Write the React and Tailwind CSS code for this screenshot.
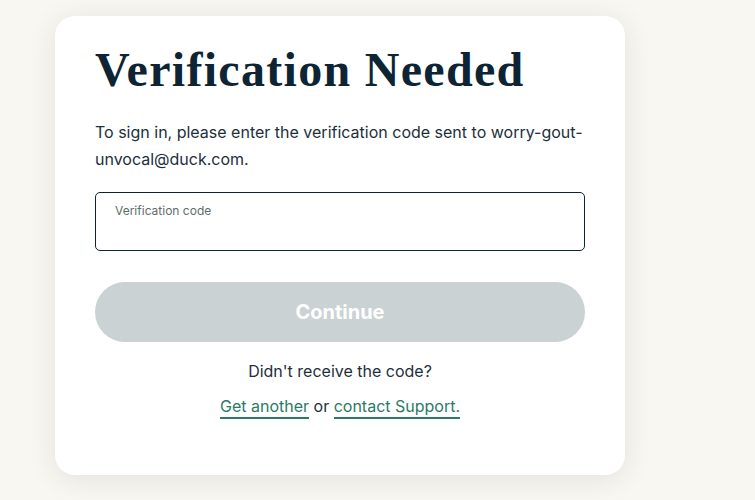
export default function App() {
  return (
    <div className="min-h-[500px] w-full bg-[#f8f7f2] pt-4 pl-[55px] font-['Inter','Liberation_Sans',sans-serif]">
      <div className="w-[570px] rounded-[20px] bg-white px-10 pt-[26px] pb-[59px] shadow-[0_4px_28px_rgba(40,40,30,0.10)]">
        <h1 className="font-['Liberation_Serif',serif] text-[48px] font-bold leading-[56px] tracking-[1.3px] text-[#0c2434]">
          Verification Needed
        </h1>

        <p className="mt-[21px] text-[16px] leading-[27px] text-[#1d2f3c]">
          To sign in, please enter the verification code sent to worry-gout-unvocal@duck.com.
        </p>

        <label className="mt-[19px] block h-[59px] rounded-[5px] border border-[#0c2434] px-[19px] pt-[11px]">
          <span className="block text-[12px] leading-[14px] text-[#5e6e69]">Verification code</span>
          <input
            type="text"
            className="mt-1 w-full bg-transparent text-[16px] text-[#0c2434] outline-none"
          />
        </label>

        <button
          disabled
          className="mt-[31px] flex h-[60px] w-full items-center justify-center rounded-full bg-[#cbd2d4] text-[20px] font-bold text-white"
        >
          Continue
        </button>

        <div className="mt-[19px] text-center text-[16px] leading-[20px] text-[#1d2f3c]">
          <p>Didn&apos;t receive the code?</p>
          <p className="mt-[15px]">
            <a className="border-b-2 border-[#2a7a68] pb-[1px] text-[#2a7a68]" href="#">
              Get another
            </a>{" "}
            or{" "}
            <a className="border-b-2 border-[#2a7a68] pb-[1px] text-[#2a7a68]" href="#">
              contact Support.
            </a>
          </p>
        </div>
      </div>
    </div>
  );
}
